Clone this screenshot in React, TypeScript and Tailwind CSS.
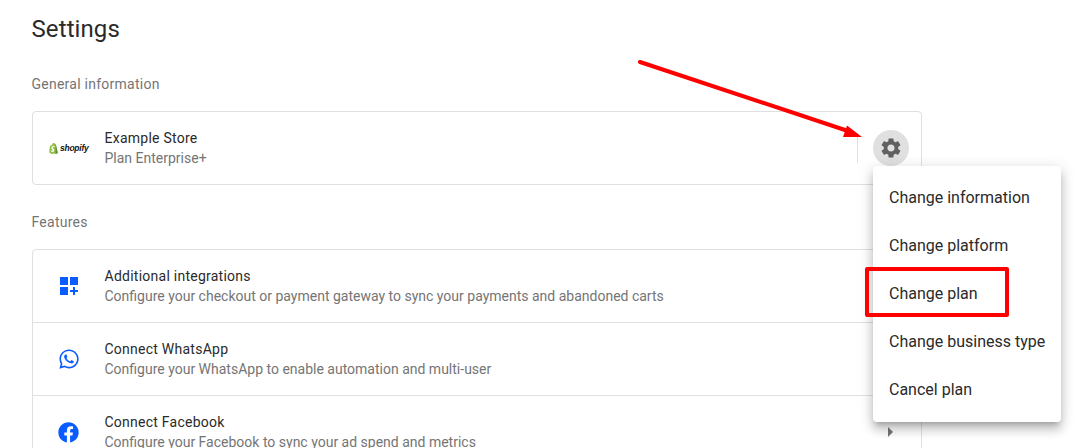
import { FaFacebook, FaWhatsapp } from 'react-icons/fa'
import { MdArrowRight, MdDashboardCustomize, MdSettings } from 'react-icons/md'

const features = [
  {
    Icon: MdDashboardCustomize,
    size: 24,
    title: 'Additional integrations',
    text: 'Configure your checkout or payment gateway to sync your payments and abandoned carts',
  },
  {
    Icon: FaWhatsapp,
    size: 22,
    title: 'Connect WhatsApp',
    text: 'Configure your WhatsApp to enable automation and multi-user',
  },
  {
    Icon: FaFacebook,
    size: 21,
    title: 'Connect Facebook',
    text: 'Configure your Facebook to sync your ad spend and metrics',
  },
]

const menuItems = [
  'Change information',
  'Change platform',
  'Change plan',
  'Change business type',
  'Cancel plan',
]

function ShopifyLogo() {
  return (
    <div className="flex items-center gap-[2px]">
      <svg width="9" height="11" viewBox="0 0 11 14">
        <path d="M1 3.5 3.5 2.5C4 .8 4.8 0 5.8 0c.9 0 1.3.6 1.5 1.3L8.3 1 11 13 3 14 0 12z" fill="#95bf47" />
        <path d="M8.3 1 11 13l-3 1z" fill="#5e8e3e" />
        <path d="M6.6 5.4s-.6-.3-1.2-.3c-1 0-1 .6-1 .8 0 .8 2.1 1.1 2.1 3 0 1.500-1 2.400-2.200 2.400-1.400 0-2.100-.9-2.100-.9l.4-1.200s.7.6 1.300.6c.4 0 .6-.3.6-.6 0-1-1.700-1.100-1.700-2.800C2.800 5 3.800 3.800 5.500 3.800c.7 0 1.500.2 1.500.2z" fill="#fff" />
      </svg>
      <span className="font-['Liberation_Sans',sans-serif] text-[8.5px] leading-none font-bold tracking-[-0.25px] text-[#111111] italic">
        shopify
      </span>
    </div>
  )
}

function RowText({ title, text }: { title: string; text: string }) {
  return (
    <div className="flex flex-col">
      <span className="text-sm leading-5 tracking-[0.25px] text-[#2a2a2a]">{title}</span>
      <span className="text-sm leading-5 text-[#757575]">{text}</span>
    </div>
  )
}

export default function App() {
  return (
    <div className="relative h-[448px] w-[1085px] overflow-hidden bg-white font-['Roboto',sans-serif]">
      <div className="flex w-[922px] flex-col pt-[14px] pl-8">
        <h1 className="-ml-[0.5px] text-2xl leading-[30px] tracking-[0.1px] text-[#2a2a2a]">Settings</h1>
        <h2 className="mt-[30px] -ml-[0.5px] text-sm leading-5 tracking-[0.25px] text-[#757575]">General information</h2>

        <div className="mt-[17px] flex h-[74px] items-center rounded border border-[#e0e0e0]">
          <div className="flex w-[71.5px] shrink-0 justify-center">
            <ShopifyLogo />
          </div>
          <RowText title="Example Store" text="Plan Enterprise+" />
          <div className="mr-3 ml-auto flex items-center">
            <div className="h-[30px] w-px bg-[#e0e0e0]" />
            <div className="ml-[15px] flex size-9 items-center justify-center rounded-full bg-[#e0e0e0]">
              <MdSettings size={24} className="text-[#616161]" />
            </div>
          </div>
        </div>

        <h2 className="mt-[27px] -ml-[0.5px] text-sm leading-5 tracking-[0.25px] text-[#757575]">Features</h2>

        <div className="mt-[17px] flex flex-col rounded border border-[#e0e0e0]">
          {features.map(({ Icon, size, title, text }, i) => (
            <div
              key={title}
              className={`flex items-center ${i > 0 ? 'h-[73px] border-t border-[#e0e0e0]' : 'h-[72px]'}`}
            >
              <div className="flex w-[71.5px] shrink-0 justify-center">
                <Icon size={size} className="text-[#0b5cff]" />
              </div>
              <RowText title={title} text={text} />
              <MdArrowRight size={24} className="mr-[19px] ml-auto text-[#757575]" />
            </div>
          ))}
        </div>
      </div>

      {/* dropdown */}
      <div className="absolute top-[166px] left-[873px] flex w-[188px] flex-col rounded bg-white py-2 shadow-[0_5px_5px_-3px_rgba(0,0,0,0.2),0_8px_10px_1px_rgba(0,0,0,0.14),0_3px_14px_2px_rgba(0,0,0,0.12)]">
        {menuItems.map((item) => (
          <div key={item} className="flex h-12 items-center px-4 text-base whitespace-nowrap text-[#2a2a2a]">
            {item}
          </div>
        ))}
      </div>

      {/* annotations */}
      <div className="absolute top-[267px] left-[865px] h-[50px] w-[144px] rounded-[2px] border-4 border-[#ff0000]" />
      <svg className="absolute top-0 left-0" width="1085" height="448" fill="none">
        <path d="M640 62 848 131" stroke="#ff0000" strokeWidth="4" strokeLinecap="round" />
        <path d="M862 137 847 125.500 843 137z" fill="#ff0000" />
      </svg>
    </div>
  )
}
